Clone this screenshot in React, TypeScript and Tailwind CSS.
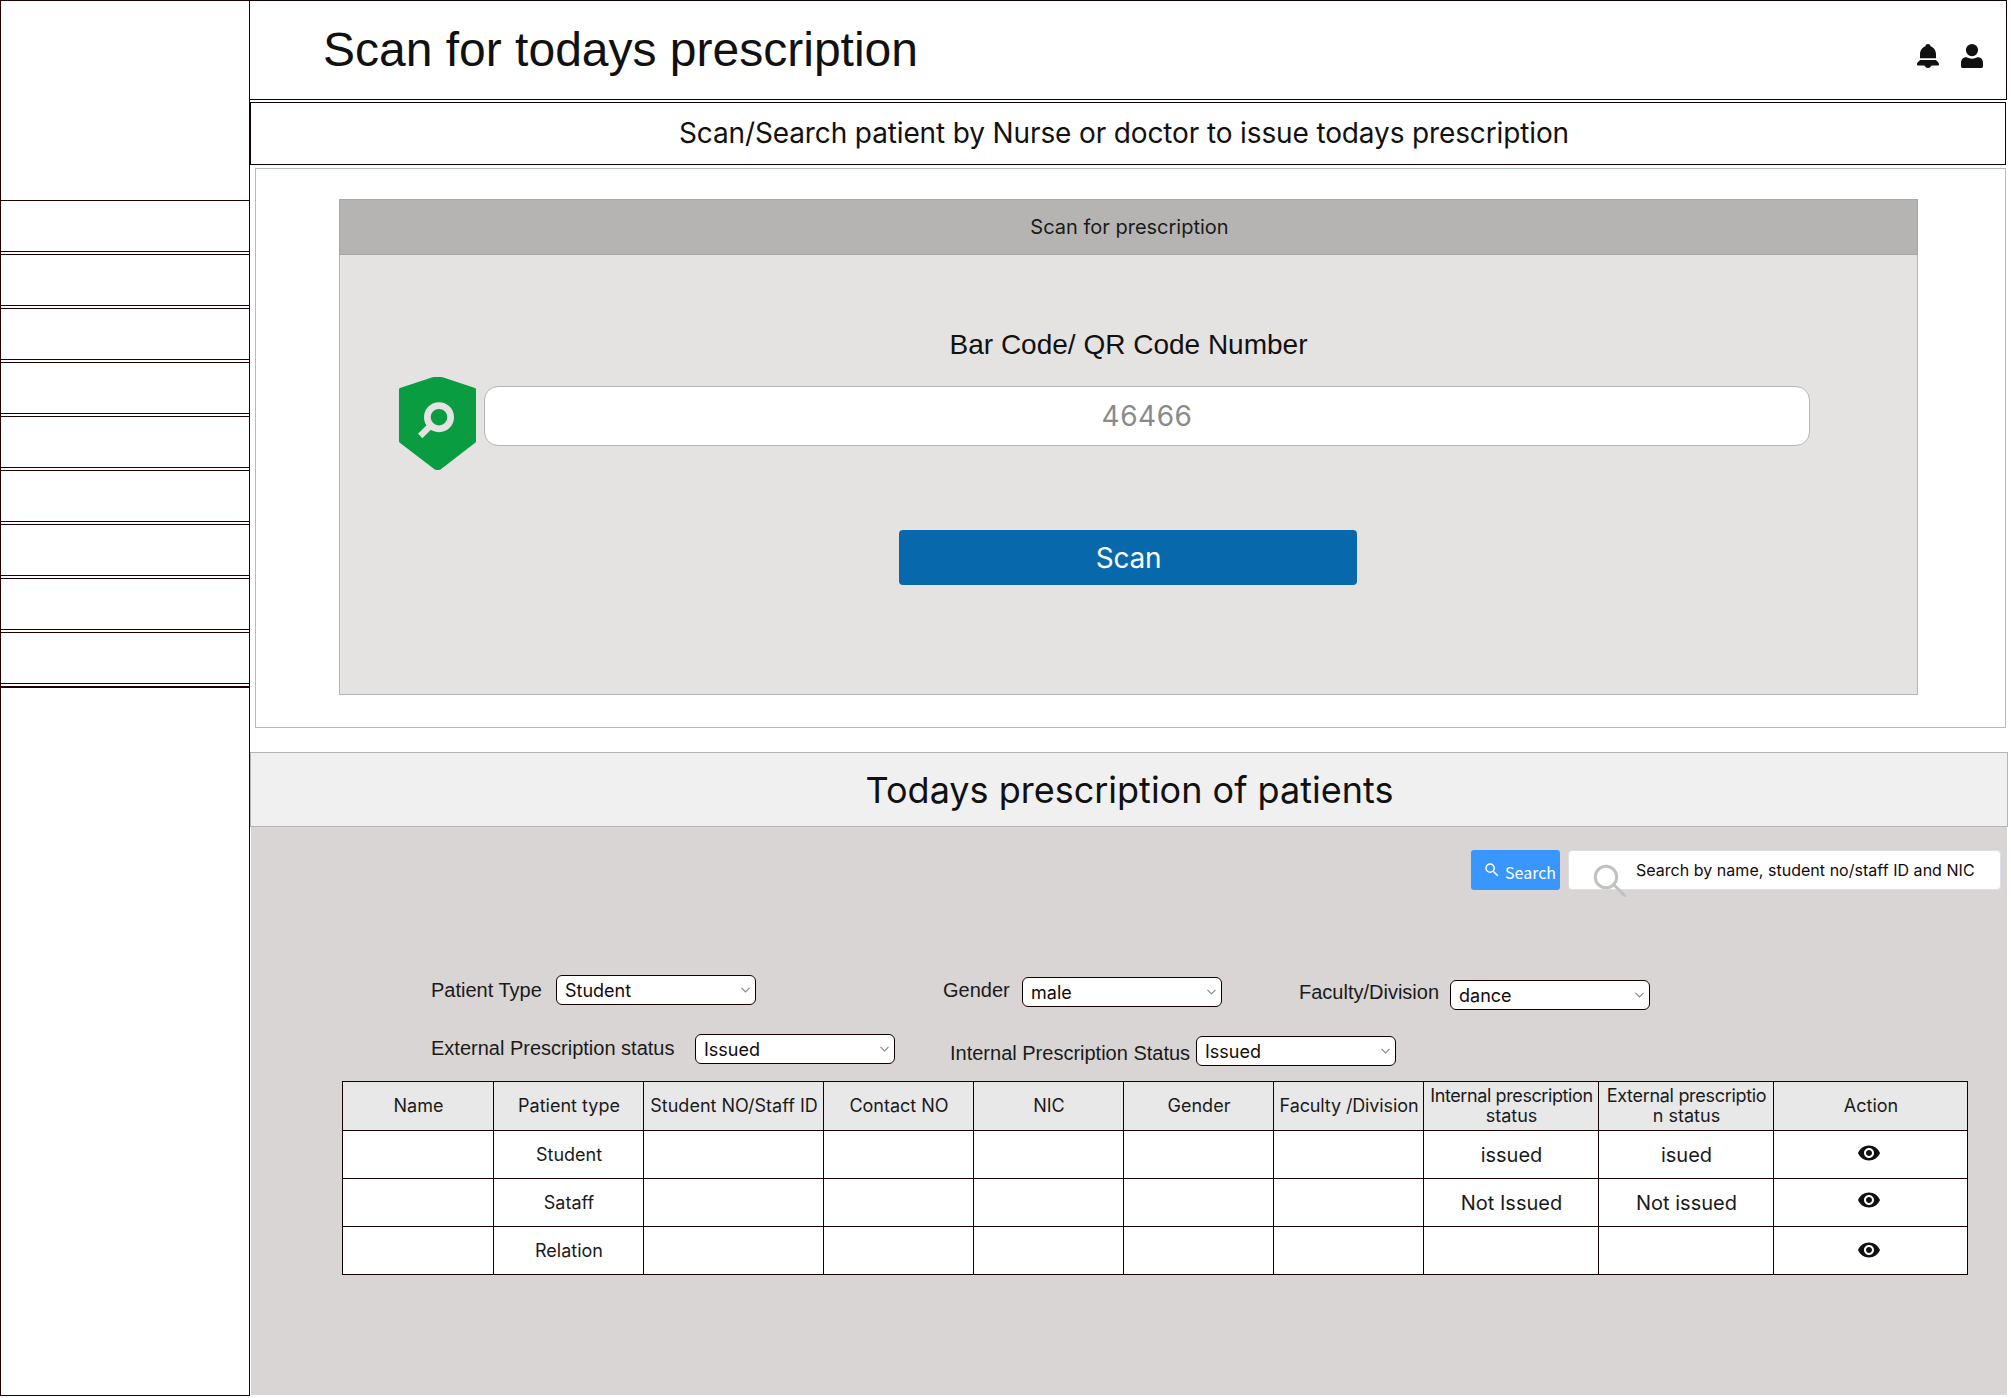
import { MdSearch, MdVisibility } from 'react-icons/md';

const inter = "font-['Inter',sans-serif]";
const arial = "font-['Liberation_Sans',sans-serif]";

function BellIcon() {
  return (
    <svg className="block h-6 w-[22px]" viewBox="0 0 22 24" fill="#111111">
      <path d="M3 14.200V10C3 6.400 5.300 3.400 8.400 2.300C8.600.9 9.700 0 11 0s2.400.9 2.600 2.300C16.700 3.400 19 6.400 19 10v4.200z" />
      <path d="M2.900 15.900h16.200c.4 1.500 2.900 2.100 2.900 4.100v.7c0 .4-.3.700-.7.700h-6.400c-.3 0-.7.300-.8.700C13.700 23.300 12.500 24 11 24s-2.700-.7-3.100-1.900c-.1-.4-.5-.7-.8-.7H.7c-.4 0-.7-.3-.7-.7V20c0-2 2.500-2.600 2.900-4.100z" />
    </svg>
  );
}

function UserIcon() {
  return (
    <svg className="block h-6 w-[22px]" viewBox="0 0 22 24" fill="#111111">
      <circle cx="11" cy="6.100" r="6.100" />
      <path d="M5 13.300c1.600 0 3.200 1.500 6 1.500s4.400-1.500 6-1.500c3 0 5 2.400 5 5.700V22.200c0 1-.8 1.800-1.800 1.800H1.800C.8 24 0 23.200 0 22.200V19c0-3.300 2-5.700 5-5.700z" />
    </svg>
  );
}

function ShieldIcon() {
  return (
    <svg className="block h-[93px] w-[77px]" viewBox="0 0 77 93">
      <path
        fill="#0a9c40"
        d="M33.500.2Q38.500-.4 43.700.2L76 11Q77 11.400 77 12.500V64Q77 65 76.200 65.800L41.500 92.400Q38.500 93.600 35.800 92.400L.8 65.800Q0 65 0 64V12.500Q0 11.400 1 11z"
      />
      <circle cx="40" cy="40.200" r="11.650" fill="none" stroke="#e5e3e2" strokeWidth="6.700" />
      <path d="M31.500 48.700L21.200 59" stroke="#e5e3e2" strokeWidth="6.200" fill="none" />
    </svg>
  );
}

function Select({ value, className }: { value: string; className: string }) {
  return (
    <div
      className={`flex h-[30px] w-[200px] shrink-0 items-center justify-between rounded-[6px] border border-[#130000] bg-white pl-2 pr-[5px] ${className}`}
    >
      <span className={`${inter} pt-0.5 text-[18px] leading-[26px] text-[#140a0a]`}>{value}</span>
      <svg className="block h-[6px] w-[9px]" viewBox="0 0 9 6" fill="none" stroke="#8a8a8a" strokeWidth="1.200">
        <path d="M.5.8L4.500 5L8.500.8" />
      </svg>
    </div>
  );
}

function Label({ text, className }: { text: string; className: string }) {
  return (
    <span className={`${arial} shrink-0 whitespace-nowrap text-[20px] leading-6 text-[#1a1a1a] ${className}`}>{text}</span>
  );
}

const headers = ['Name', 'Patient type', 'Student NO/Staff ID', 'Contact NO', 'NIC', 'Gender'];

const rows = [
  { type: 'Student', internal: 'issued', external: 'isued', eye: 'pb-[3px]' },
  { type: 'Sataff', internal: 'Not Issued', external: 'Not issued', eye: 'pb-[5px]' },
  { type: 'Relation', internal: '', external: '', eye: 'pb-[1px]' },
];

const cols = 'grid grid-cols-[150px_149px_179px_149px_149px_149px_149px_174px_174px_193px] gap-px';

function Table() {
  const head = 'flex items-center justify-center whitespace-nowrap bg-[#e8e8e8] pb-px pl-px text-center text-[18px] text-[#1a1a1a]';
  const cell = 'flex items-center justify-center bg-white text-[#1a1a1a]';
  return (
    <div className={`${inter} ml-[91px] mt-[17px] flex w-[1626px] flex-col gap-px border border-[#130000] bg-[#130000]`}>
      <div className={`${cols} h-12`}>
        {headers.map((h) => (
          <div key={h} className={head}>{h}</div>
        ))}
        <div className={`${head} tracking-[-0.12px]`}>Faculty /Division</div>
        <div className={`${head} leading-5 tracking-[-0.4px]`}>
          <div>Internal prescription<div className="tracking-normal">status</div></div>
        </div>
        <div className={`${head} leading-5 tracking-[-0.3px]`}>
          <div>External prescriptio<div className="tracking-normal">n status</div></div>
        </div>
        <div className={head}>Action</div>
      </div>
      {rows.map((r) => (
        <div key={r.type} className={`${cols} h-[47px]`}>
          <div className={cell} />
          <div className={`${cell} pl-px text-[18px]`}>{r.type}</div>
          <div className={cell} />
          <div className={cell} />
          <div className={cell} />
          <div className={cell} />
          <div className={cell} />
          <div className={`${cell} pl-px text-[20px]`}>{r.internal}</div>
          <div className={`${cell} pl-px text-[20px]`}>{r.external}</div>
          <div className={`${cell} pr-[3px] ${r.eye}`}>
            <MdVisibility className="h-6 w-6 text-[#111111]" />
          </div>
        </div>
      ))}
    </div>
  );
}

export default function App() {
  return (
    <div className="flex h-[1398px] w-[2011px] overflow-hidden bg-white">
      <aside className="flex h-[1396px] w-[250px] shrink-0 flex-col border border-[#220000] pt-[199px]">
        <div className="flex flex-col gap-0.5">
          {Array.from({ length: 9 }, (_, i) => (
            <div key={i} className="h-[52px] border-y border-[#220000]" />
          ))}
          <div className="h-0.5 bg-[#220000]" />
        </div>
      </aside>

      <main className="flex w-[1761px] shrink-0 flex-col">
        <header className="flex h-[100px] w-[1757px] items-center justify-between border-y border-r border-[#130000] pl-[73px] pr-[23px]">
          <h1 className={`${arial} text-[48px] leading-[56px] text-[#111111]`}>Scan for todays prescription</h1>
          <div className="flex gap-[22px] pt-3">
            <BellIcon />
            <UserIcon />
          </div>
        </header>

        <div className="mt-0.5 flex h-[63px] w-[1756px] items-center justify-center border border-[#130000] pb-0.5 pr-2">
          <h2 className={`${inter} text-[28px] leading-9 tracking-[-0.13px] text-[#111111]`}>
            Scan/Search patient by Nurse or doctor to issue todays prescription
          </h2>
        </div>

        <section className="ml-[5px] mt-[3px] h-[560px] w-[1751px] border border-[#b9b9bb] pl-[83px] pt-[30px]">
          <div className="flex h-[496px] w-[1579px] flex-col border border-[#b5b5b5] bg-[#e5e3e2]">
            <div className="-mx-px -mt-px flex h-14 shrink-0 items-center justify-center border border-[#a8a7a6] bg-[#b6b4b3] pl-0.5">
              <span className={`${inter} text-[20px] text-[#1a1a1a]`}>Scan for prescription</span>
            </div>
            <h3 className={`${arial} mt-[74px] text-center text-[28px] leading-8 text-[#111111]`}>Bar Code/ QR Code Number</h3>
            <div className="ml-[59px] mt-4 flex gap-2">
              <ShieldIcon />
              <div
                className={`${inter} mt-[9px] flex h-[60px] w-[1326px] items-center justify-center rounded-[14px] border border-[#b5b5b5] bg-white text-[28px] tracking-[0.5px] text-[#8a8a8a]`}
              >
                46466
              </div>
            </div>
            <button
              className={`${inter} ml-[559px] mt-[60px] flex h-[55px] w-[458px] items-center justify-center rounded-[4px] bg-[#0768ab] pl-px text-[28px] tracking-[-0.3px] text-white`}
            >
              Scan
            </button>
          </div>
        </section>

        <div className="mt-6 flex h-[75px] w-[1758px] shrink-0 items-center justify-center border border-[#b5b5b5] bg-[#f0f0f0] pl-px">
          <h2 className={`${inter} text-[36px] text-[#111111]`}>Todays prescription of patients</h2>
        </div>

        <section className="ml-px h-[568px] w-[1756px] shrink-0 bg-[#d9d5d4] pt-[23px]">
          <div className="ml-[1220px] flex h-10 gap-2">
            <div className="flex w-[89px] gap-[4px] rounded-[3px] bg-[#3a96ff] pl-3 text-white">
              <MdSearch className="mt-[11px] h-[18px] w-[18px] shrink-0" />
              <span className="mt-[10px] font-['Noto_Sans_CJK_SC',sans-serif] text-[16px] leading-6">Search</span>
            </div>
            <div className="flex w-[433px] rounded-[4px] border border-[#dcdfe6] bg-white pl-6">
              <svg className="mt-[13px] block h-[34px] w-[34px] shrink-0" viewBox="0 0 34 34" fill="none" stroke="#bfc1c4" strokeWidth="3">
                <circle cx="13" cy="13" r="10.700" />
                <path d="M20.800 20.800L31.500 31.500" strokeLinecap="round" />
              </svg>
              <span className={`${inter} ml-[9px] mt-[7px] whitespace-nowrap text-[16px] leading-6 tracking-[0.03px] text-[#140a0a]`}>
                Search by name, student no/staff ID and NIC
              </span>
            </div>
          </div>

          <div className="ml-[180px] mt-[85px] flex h-[35px] items-start">
            <Label text="Patient Type" className="mt-[3px] w-[125px]" />
            <Select value="Student" className="" />
            <Label text="Gender" className="ml-[187px] mt-[3px] w-[79px]" />
            <Select value="male" className="mt-[2px]" />
            <Label text="Faculty/Division" className="ml-[77px] mt-[5px] w-[151px]" />
            <Select value="dance" className="mt-[5px]" />
          </div>
          <div className="ml-[180px] mt-6 flex h-[30px] items-start">
            <Label text="External Prescription status" className="mt-[2px] w-[264px]" />
            <Select value="Issued" className="" />
            <Label text="Internal Prescription Status" className="ml-[55px] mt-[7px] w-[246px]" />
            <Select value="Issued" className="mt-[2px]" />
          </div>
          <Table />
        </section>
      </main>
    </div>
  );
}
